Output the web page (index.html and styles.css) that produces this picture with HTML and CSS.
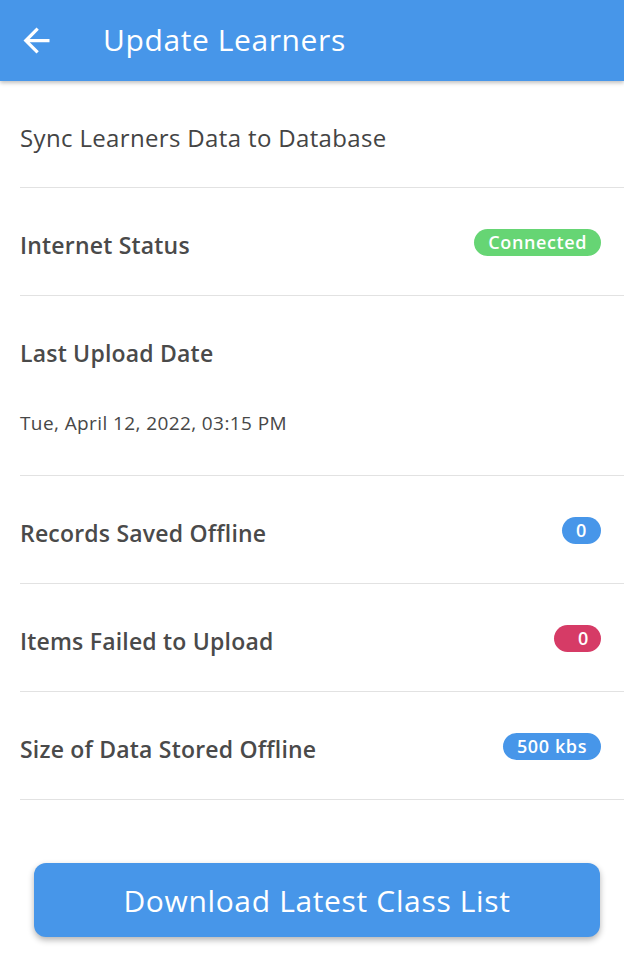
FILE: index.html
```html
<!DOCTYPE html>
<html>
<head>
<meta charset="utf-8">
<link rel="stylesheet" href="styles.css">
</head>
<body>
<header class="appbar">
  <svg class="back" width="39" height="39" viewBox="0 0 24 24"><path d="M20 11H7.83l5.59-5.59L12 4l-8 8 8 8 1.41-1.41L7.83 13H20v-2z" fill="#fff"/></svg>
  <h1 class="title">Update Learners</h1>
</header>
<main class="list">
  <div class="row"><span class="label regular">Sync Learners Data to Database</span></div>
  <div class="row"><span class="label">Internet Status</span><span class="badge green">Connected</span></div>
  <div class="row tall">
    <span class="label">Last Upload Date</span>
    <span class="date">Tue, April 12, 2022, 03:15 PM</span>
  </div>
  <div class="row"><span class="label">Records Saved Offline</span><span class="badge blue">0</span></div>
  <div class="row"><span class="label">Items Failed to Upload</span><span class="badge red">0</span></div>
  <div class="row"><span class="label">Size of Data Stored Offline</span><span class="badge blue">500 kbs</span></div>
</main>
<div class="actions">
  <button class="btn">Download Latest Class List</button>
</div>
</body>
</html>
```
FILE: styles.css
```css
* { box-sizing: border-box; }
html, body { margin: 0; padding: 0; background: #fff; }
body { font-family: "Open Sans", "Lato", sans-serif; color: #474747; width: 624px; height: 966px; overflow: hidden; }
.appbar {
  height: 81px; background: #4796e9; display: flex; align-items: center;
  padding-left: 17px; box-shadow: 0 2px 4px rgba(0,0,0,0.25); position: relative;
}
.back { display: block; margin-top: -1px; }
.title { margin: -3px 0 0 47px; font-weight: 400; font-size: 30px; color: #fff; letter-spacing: 0.6px; }
.list { padding-left: 20px; }
.row {
  height: 108px; display: flex; align-items: center; justify-content: space-between;
  border-bottom: 1.5px solid #e2e2e2; padding-right: 23px; padding-top: 6px;
}
.row:first-child { height: 107px; }
.row.tall { height: 180px; flex-direction: column; align-items: flex-start; justify-content: flex-start; padding-top: 41px; gap: 41px; }
.label { font-size: 23px; font-weight: 600; letter-spacing: 0.2px; color: #4a4a4a; }
.label.regular { font-weight: 400; font-size: 24px; letter-spacing: 0.35px; color: #444; }
.date { font-size: 19px; letter-spacing: 0.4px; }
.badge {
  color: #fff; font-size: 18px; font-weight: 600; line-height: 27px; height: 27px;
  padding: 0 14px; border-radius: 14px; margin-top: -5px; min-width: 36px; text-align: center; letter-spacing: 0.6px;
}
.green { background: #66d574; }
.blue { background: #4796e9; }
.red { background: #d63b66; padding: 0 12px 0 24px; }
.actions { padding: 63px 24px 0 34px; }
.btn {
  width: 566px; height: 74px; border: 0; border-radius: 12px; background: #4796e9; color: #fff;
  font-family: "Open Sans", sans-serif; font-size: 30px; letter-spacing: 0.65px; box-shadow: 0 3px 6px rgba(0,0,0,0.3);
}
```
